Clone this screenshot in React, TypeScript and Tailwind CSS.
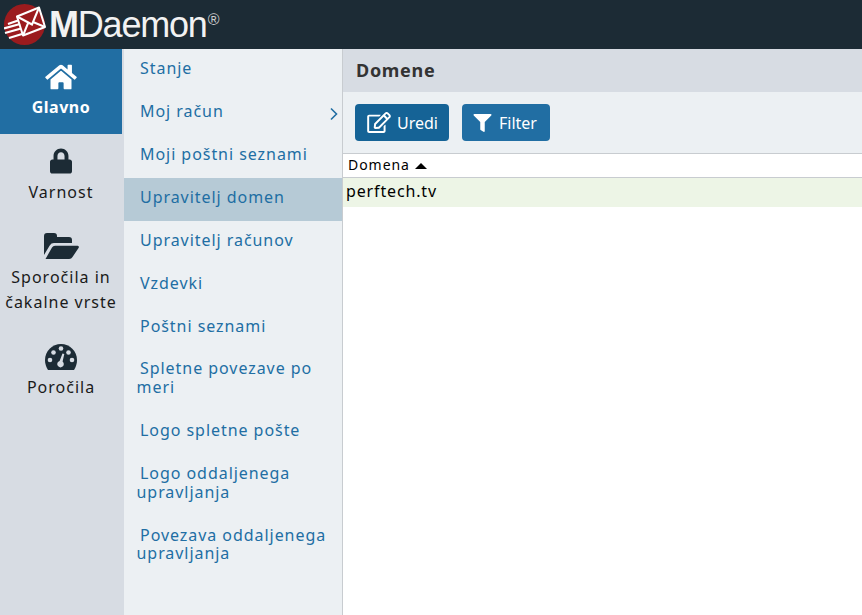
import { FaHome, FaLock, FaRegEdit, FaFilter } from "react-icons/fa"

const font = "font-['Noto_Sans','Open_Sans',sans-serif]"

function FolderIcon() {
  return (
    <svg width="35" height="26" viewBox="0 0 35 26" fill="currentColor">
      <path d="M0 22V3a3 3 0 0 1 3-3h7a3 3 0 0 1 3 3v1h12a3 3 0 0 1 3 3v3H10a5 5 0 0 0-4.3 2.4z" />
      <path d="M1.5 26 8 14.5a3.500 3.500 0 0 1 3-1.700h22.500a1.300 1.300 0 0 1 1.200 2L28.500 24a4 4 0 0 1-3.300 2z" />
    </svg>
  )
}

function GaugeIcon() {
  return (
    <svg width="32" height="26" viewBox="0 0 32 26">
      <path d="M16 0C7.200 0 0 7.200 0 16c0 3.800 1.100 7.200 3 10h26c1.900-2.800 3-6.200 3-10C32 7.200 24.800 0 16 0z" fill="#1c2b35" />
      <g fill="#d7dce3">
        <circle cx="5" cy="16" r="2.300" />
        <circle cx="8.500" cy="8.500" r="2.300" />
        <circle cx="16" cy="4.500" r="2.300" />
        <circle cx="23.500" cy="8.500" r="2.300" />
        <circle cx="27" cy="16" r="2.300" />
        <path d="M17.500 9.500 19.300 10 17.600 17.500a3.300 3.300 0 1 1-3-.6z" />
      </g>
    </svg>
  )
}

const mainNav = [
  { label: "Varnost", box: "pt-[14px]", text: "mt-[6px]", icon: <FaLock className="w-[22px] h-[26px]" /> },
  { label: "Sporočila in čakalne vrste", box: "pt-[27px]", text: "mt-[6px]", icon: <FolderIcon /> },
  { label: "Poročila", box: "pt-[28px]", text: "mt-[5px]", icon: <GaugeIcon /> },
]

const subNav = [
  { label: "Stanje" },
  { label: "Moj račun", arrow: true },
  { label: "Moji poštni seznami" },
  { label: "Upravitelj domen", active: true },
  { label: "Upravitelj računov" },
  { label: "Vzdevki" },
  { label: "Poštni seznami" },
  { label: "Spletne povezave po meri" },
  { label: "Logo spletne pošte" },
  { label: "Logo oddaljenega upravljanja" },
  { label: "Povezava oddaljenega upravljanja" },
]

function Logo() {
  return (
    <div className="flex items-center pl-1">
      <svg width="42" height="42" viewBox="0 0 42 42" className="shrink-0">
        <circle cx="20.500" cy="20.500" r="20.500" fill="#9b1b1e" />
        <path d="M13 12.500 35 3.500 41 23 19 31.500z" fill="#9b1b1e" stroke="#fff" strokeWidth="2" strokeLinejoin="round" />
        <path d="M13 12.500 28 20.500 35 3.500M19 31.500 24.500 18M41 23 29 18" fill="none" stroke="#fff" strokeWidth="2" />
        <path d="M4 20 14 16.500M0 24.500 16 20M1 29 17 24.500M5 34 18 30" stroke="#fff" strokeWidth="2.200" />
      </svg>
      <span className="ml-[3px] text-[36px] leading-none text-[#f2f2f2] font-['Liberation_Sans',sans-serif] tracking-[-1.2px]">
        <span className="font-bold">M</span>Daemon
      </span>
      <span className="self-start mt-[8px] ml-[1px] text-[16px] leading-none text-[#ccc] font-['Liberation_Sans',sans-serif]">®</span>
    </div>
  )
}

export default function App() {
  return (
    <div className={`${font} w-[862px] h-[615px] flex flex-col overflow-hidden bg-white`}>
      <header className="h-[49px] shrink-0 bg-[#1c2b35] flex items-center">
        <Logo />
      </header>
      <div className="flex flex-1 min-h-0">
        <nav className="w-[124px] shrink-0 bg-[#d7dce3] flex flex-col">
          <div className="w-[122px] h-[85px] bg-[#216ea3] text-white flex flex-col items-center pt-[14px]">
            <FaHome className="w-[32px] h-[28px]" />
            <span className="mt-[4px] text-[16px] leading-[24px] font-bold tracking-[0.5px]">Glavno</span>
          </div>
          {mainNav.map((item) => (
            <div key={item.label} className={`w-[122px] flex flex-col items-center text-center text-[#1c2b35] ${item.box}`}>
              {item.icon}
              <span className={`${item.text} text-[16px] leading-[25.500px] tracking-[1px] text-[#1a1a1a]`}>{item.label}</span>
            </div>
          ))}
        </nav>
        <div className="w-[219px] shrink-0 bg-[#ecf0f3] border-r border-[#c8ccd0] flex flex-col">
          {subNav.map((item, i) => (
            <div
              key={item.label}
              className={`relative pl-[12.500px] pr-[13px] ${i < 7 ? "pt-[10px] pb-[14.200px]" : "pt-[9.200px] pb-[15px]"} text-[16px] leading-[18.800px] tracking-[0.95px] text-[#216ea3] indent-[3.500px] ${item.active ? "bg-[#b6cad6]" : ""}`}
            >
              {item.label}
              {item.arrow && (
                <svg width="8" height="14" viewBox="0 0 8 14" className="absolute right-[4px] top-[15px]" fill="none" stroke="currentColor" strokeWidth="1.600">
                  <path d="M1 1.500 6.500 7 1 12.500" />
                </svg>
              )}
            </div>
          ))}
        </div>
        <main className="flex-1 min-w-0 flex flex-col">
          <div className="h-[43px] bg-[#d7dce3] flex items-center pl-[13px] pb-[1px] text-[18px] font-bold tracking-[0.7px] text-[#333]">Domene</div>
          <div className="h-[61px] bg-[#ecf0f3] flex items-center gap-[13px] pl-[12px]">
            <button className="h-[37px] w-[94px] rounded-[4px] bg-[#156396] text-white flex items-center pl-[12px] gap-[6px] text-[16px]">
              <FaRegEdit className="w-[24px] h-[21px]" />
              Uredi
            </button>
            <button className="h-[37px] w-[88px] rounded-[4px] bg-[#216ea3] text-white flex items-center pl-[11px] gap-[7px] text-[16px]">
              <FaFilter className="w-[19px] h-[18px]" />
              Filter
            </button>
          </div>
          <div className="h-[25px] border-y border-[#c8ccd0] flex items-center pl-[5px] pb-[3px] text-[14px] tracking-[0.95px] text-black">
            Domena
            <span className="ml-[5px] mt-[3px] w-0 h-0 border-x-[6px] border-x-transparent border-b-[6px] border-b-black" />
          </div>
          <div className="h-[29px] bg-[#edf5e6] flex items-center pl-[3px] pb-[4px] text-[16px] tracking-[0.85px] text-black">perftech.tv</div>
        </main>
      </div>
    </div>
  )
}
